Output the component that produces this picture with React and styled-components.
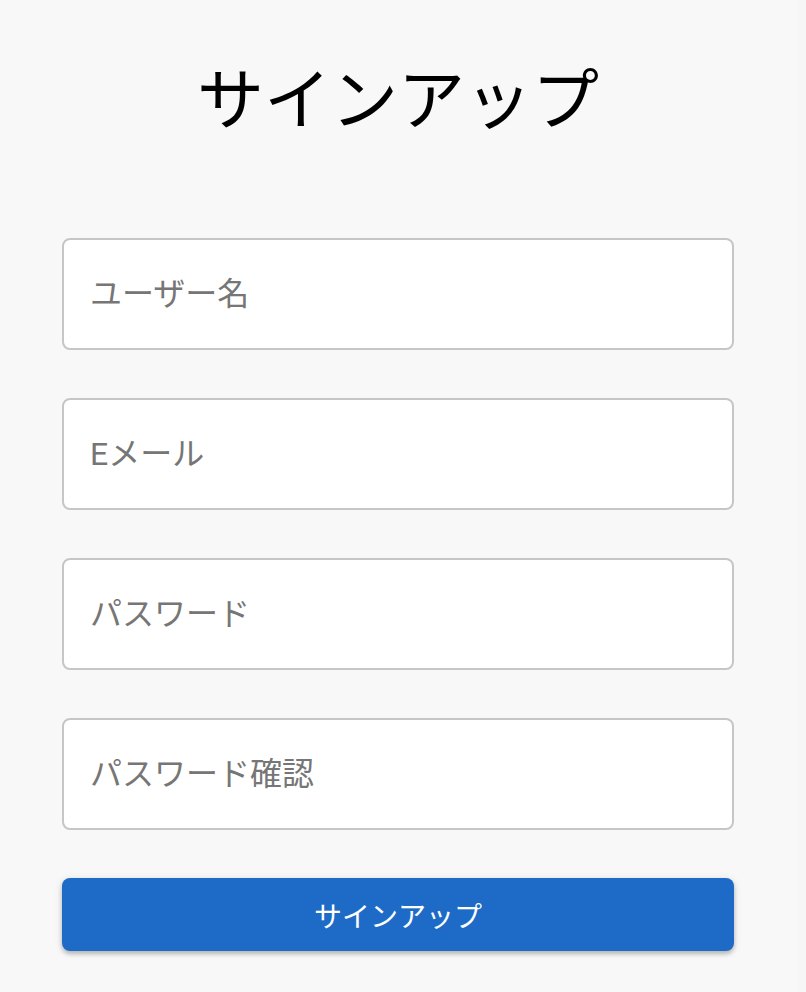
import React from "react";
import styled, { createGlobalStyle } from "styled-components";

const GlobalStyle = createGlobalStyle`
  html, body {
    margin: 0;
    padding: 0;
    background: #f8f8f8;
  }
  body {
    font-family: Roboto, "Noto Sans CJK JP", sans-serif;
  }
`;

const Page = styled.div`
  display: flex;
  min-height: 992px;
`;

const Main = styled.main`
  width: 798px;
  box-sizing: border-box;
  padding: 50px 64px 40px 62px;
  background: #f8f8f8;
`;

const Gutter = styled.div`
  flex: 1;
  background: #f6f6f6;
`;

const Title = styled.h1`
  margin: 0 0 98px;
  text-align: center;
  font-family: "Noto Sans CJK JP", sans-serif;
  font-weight: 400;
  font-size: 67px;
  line-height: 90px;
  color: #000;
`;

const Form = styled.form`
  display: flex;
  flex-direction: column;
  gap: 48px;
`;

const Field = styled.input`
  display: block;
  width: 100%;
  height: 112px;
  box-sizing: border-box;
  margin: 0;
  padding: 0 26px;
  border: 2px solid #c6c6c6;
  border-radius: 8px;
  background: #fff;
  font-family: Roboto, "Noto Sans CJK JP", sans-serif;
  font-weight: 400;
  font-size: 32px;
  color: #222;
  outline: none;

  &::placeholder {
    color: #767676;
    opacity: 1;
  }
`;

const SubmitButton = styled.button`
  display: block;
  width: 100%;
  height: 73px;
  border: none;
  border-radius: 8px;
  background: #1d6bc6;
  color: #fff;
  font-family: Roboto, "Noto Sans CJK JP", sans-serif;
  font-size: 28px;
  cursor: pointer;
  box-shadow: 0 3px 4px rgba(0, 0, 0, 0.22), 0 1px 8px rgba(0, 0, 0, 0.1);
`;

const fields = [
  { name: "username", type: "text", placeholder: "ユーザー名" },
  { name: "email", type: "email", placeholder: "Eメール" },
  { name: "password", type: "password", placeholder: "パスワード" },
  { name: "passwordConfirm", type: "password", placeholder: "パスワード確認" },
];

export default function App() {
  return (
    <>
      <GlobalStyle />
      <Page>
        <Main>
          <Title>サインアップ</Title>
          <Form onSubmit={(e) => e.preventDefault()}>
            {fields.map((f) => (
              <Field key={f.name} name={f.name} type={f.type} placeholder={f.placeholder} />
            ))}
            <SubmitButton type="submit">サインアップ</SubmitButton>
          </Form>
        </Main>
        <Gutter />
      </Page>
    </>
  );
}
